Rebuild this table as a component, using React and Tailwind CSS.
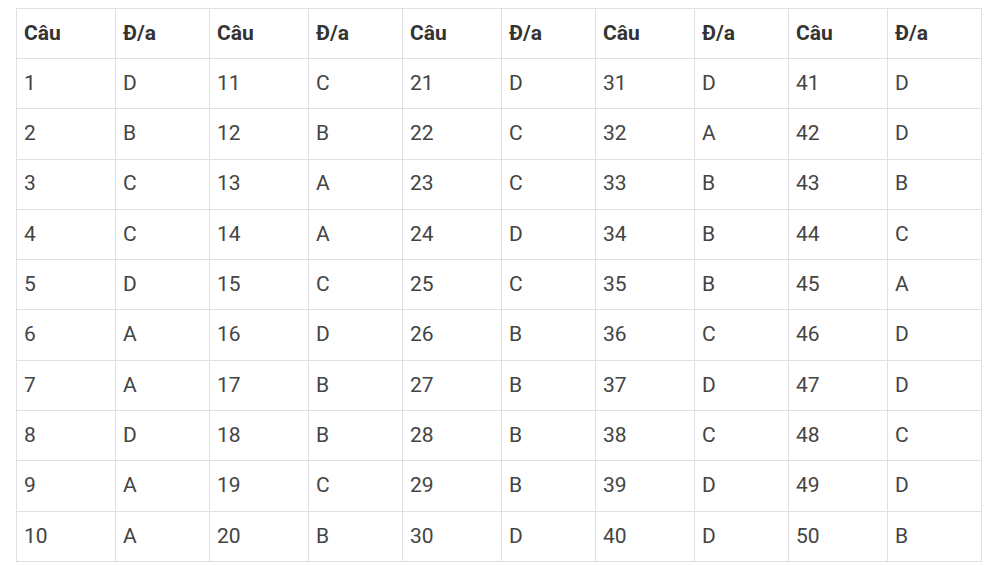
import React from 'react';

const answers = [
  'DBCCDAADAA',
  'CBAACDBBCB',
  'DCCDCBBBBD',
  'DABBBCDCDD',
  'DDBCADDCDB',
];

const widths = ['w-[99px]', 'w-[94px]'];

export default function App() {
  const rows = Array.from({ length: 10 }, (_, i) => i);

  return (
    <div className="min-h-[566px] bg-white pt-2 pl-4 font-['Roboto',sans-serif] text-[21px] text-[#333]">
      <table className="table-fixed border-collapse">
        <colgroup>
          {answers.map((_, g) => (
            <React.Fragment key={g}>
              <col className={widths[0]} />
              <col className={widths[1]} />
            </React.Fragment>
          ))}
        </colgroup>
        <thead>
          <tr className="h-[50px]">
            {answers.map((_, g) => (
              <React.Fragment key={g}>
                <th className="border border-[#e2dfe4] pl-[7px] pr-2 text-left font-bold">Câu</th>
                <th className="border border-[#e2dfe4] pl-[7px] pr-2 text-left font-bold">Đ/a</th>
              </React.Fragment>
            ))}
          </tr>
        </thead>
        <tbody>
          {rows.map((i) => (
            <tr key={i} className="h-[50.3px]">
              {answers.map((col, g) => (
                <React.Fragment key={g}>
                  <td className="border border-[#e2dfe4] pl-[7px] pr-2 text-[#444]">{g * 10 + i + 1}</td>
                  <td className="border border-[#e2dfe4] pl-[7px] pr-2 text-[#444]">{col[i]}</td>
                </React.Fragment>
              ))}
            </tr>
          ))}
        </tbody>
      </table>
    </div>
  );
}
